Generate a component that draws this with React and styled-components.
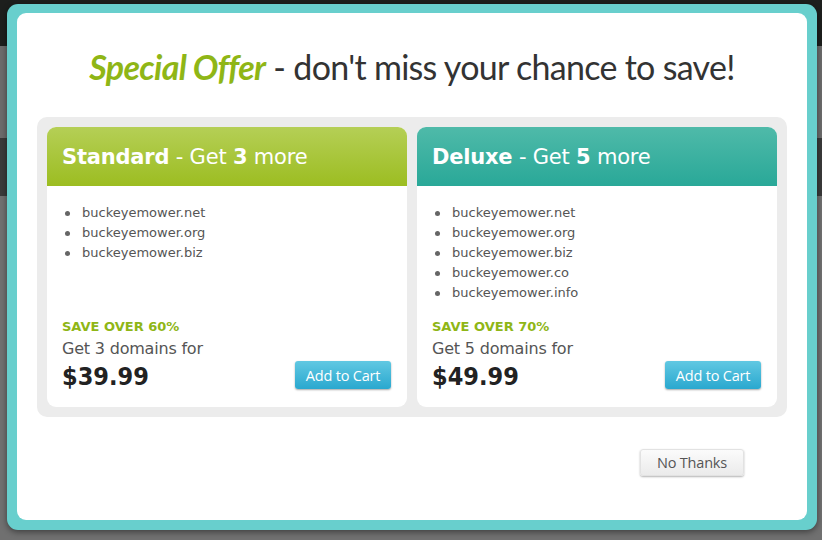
import React from 'react';
import styled, { createGlobalStyle } from 'styled-components';

const Global = createGlobalStyle`
    html, body {
        margin: 0;
        padding: 0;
    }
    body {
        width: 822px;
        height: 540px;
        overflow: hidden;
        font-family: "DejaVu Sans", "Liberation Sans", sans-serif;
        background: linear-gradient(to bottom,
            #1d1f1d 0px, #1d1f1d 46px,
            #6c6c6c 46px, #6c6c6c 138px,
            #3a3a3a 138px, #3a3a3a 196px,
            #707070 196px, #707070 540px);
    }
`;

const Frame = styled.div`
    position: absolute;
    left: 7px;
    top: 4px;
    width: 790px;
    height: 507px;
    padding: 9px 10px 10px 10px;
    background: #68cfcd;
    border-radius: 11px;
    box-shadow: 0 2px 6px rgba(0, 0, 0, 0.45);
`;

const Sheet = styled.div`
    height: 100%;
    background: #fff;
    border-radius: 9px;
    padding: 0 20px;
    box-sizing: border-box;
    display: flex;
    flex-direction: column;
`;

const Title = styled.h1`
    margin: 0;
    padding: 33px 0 0;
    box-sizing: border-box;
    height: 104px;
    text-align: center;
    font-family: "Lato", "Open Sans", sans-serif;
    font-weight: 400;
    font-size: 34px;
    letter-spacing: -0.7px;
    color: #333;

    em {
        color: #8fb616;
        font-weight: 700;
        font-style: italic;
    }
`;

const Panel = styled.div`
    background: #ececec;
    border-radius: 10px;
    padding: 10px;
    display: grid;
    grid-template-columns: 1fr 1fr;
    gap: 10px;
    height: 300px;
    box-sizing: border-box;
`;

const Card = styled.div`
    background: #fff;
    border-radius: 9px;
    overflow: hidden;
    display: flex;
    flex-direction: column;
`;

const CardHead = styled.div`
    height: 59px;
    box-sizing: border-box;
    padding: 18px 15px 0;
    color: #fff;
    font-size: 21px;
    letter-spacing: -0.2px;
    background: ${p => p.$tone === 'teal'
        ? 'linear-gradient(to bottom, #4fbaa9, #29a898)'
        : 'linear-gradient(to bottom, #b5cf56, #9cbd21)'};

    b {
        font-weight: 700;
    }
`;

const Domains = styled.ul`
    margin: 17px 0 0;
    padding: 0 0 0 35px;
    height: 110px;
    list-style: none;

    li {
        position: relative;
        height: 20px;
        line-height: 20px;
        font-size: 13px;
        color: #555;
    }
    li::before {
        content: '';
        position: absolute;
        left: -17px;
        top: 8px;
        width: 5px;
        height: 5px;
        border-radius: 50%;
        background: #666;
    }
`;

const CardFoot = styled.div`
    margin-top: auto;
    padding: 0 16px 15px 15px;
    display: flex;
    align-items: flex-end;
    justify-content: space-between;
`;

const Save = styled.div`
    font-size: 13px;
    font-weight: 700;
    color: #8fb616;
    line-height: 18px;
`;

const Lead = styled.div`
    font-size: 16px;
    color: #555;
    line-height: 26px;
    letter-spacing: -0.2px;
`;

const Price = styled.div`
    font-family: "DejaVu Sans Condensed", "DejaVu Sans", sans-serif;
    font-size: 25px;
    font-weight: 700;
    color: #222;
    line-height: 30px;
    letter-spacing: 0px;
`;

const CartButton = styled.button`
    width: 96px;
    height: 28px;
    margin-bottom: 3px;
    border: none;
    border-radius: 3px;
    background: linear-gradient(to bottom, #61c8e2, #2aa8cf);
    box-shadow: 0 1px 2px rgba(0, 0, 0, 0.35);
    color: #fff;
    font-family: "Open Sans", sans-serif;
    font-size: 14.5px;
    letter-spacing: -0.2px;
    padding: 0;
`;

const Footer = styled.div`
    display: flex;
    justify-content: flex-end;
    padding: 32px 43px 0 0;
`;

const DismissButton = styled.button`
    width: 104px;
    height: 27px;
    border: 1px solid #e2e2e2;
    border-radius: 3px;
    background: linear-gradient(to bottom, #fbfbfb, #ebebeb);
    box-shadow: 0 1px 2px rgba(0, 0, 0, 0.3);
    color: #555;
    font-family: "Open Sans", sans-serif;
    font-size: 14.5px;
    letter-spacing: -0.2px;
    padding: 0;
`;

const plans = [
    {
        name: 'Standard',
        count: 3,
        tone: 'green',
        domains: ['buckeyemower.net', 'buckeyemower.org', 'buckeyemower.biz'],
        save: 'SAVE OVER 60%',
        price: '$39.99'
    },
    {
        name: 'Deluxe',
        count: 5,
        tone: 'teal',
        domains: ['buckeyemower.net', 'buckeyemower.org', 'buckeyemower.biz', 'buckeyemower.co', 'buckeyemower.info'],
        save: 'SAVE OVER 70%',
        price: '$49.99'
    }
];

const App = () => {
    return (
        <>
            <Global />
            <Frame>
                <Sheet>
                    <Title><em>Special Offer</em> - don't miss your chance to save!</Title>
                    <Panel>
                        {plans.map(plan => (
                            <Card key={plan.name}>
                                <CardHead $tone={plan.tone}>
                                    <b>{plan.name}</b> - Get <b>{plan.count}</b> more
                                </CardHead>
                                <Domains>
                                    {plan.domains.map(d => <li key={d}>{d}</li>)}
                                </Domains>
                                <CardFoot>
                                    <div>
                                        <Save>{plan.save}</Save>
                                        <Lead>Get {plan.count} domains for</Lead>
                                        <Price>{plan.price}</Price>
                                    </div>
                                    <CartButton>Add to Cart</CartButton>
                                </CardFoot>
                            </Card>
                        ))}
                    </Panel>
                    <Footer>
                        <DismissButton>No Thanks</DismissButton>
                    </Footer>
                </Sheet>
            </Frame>
        </>
    )
}

export default App
